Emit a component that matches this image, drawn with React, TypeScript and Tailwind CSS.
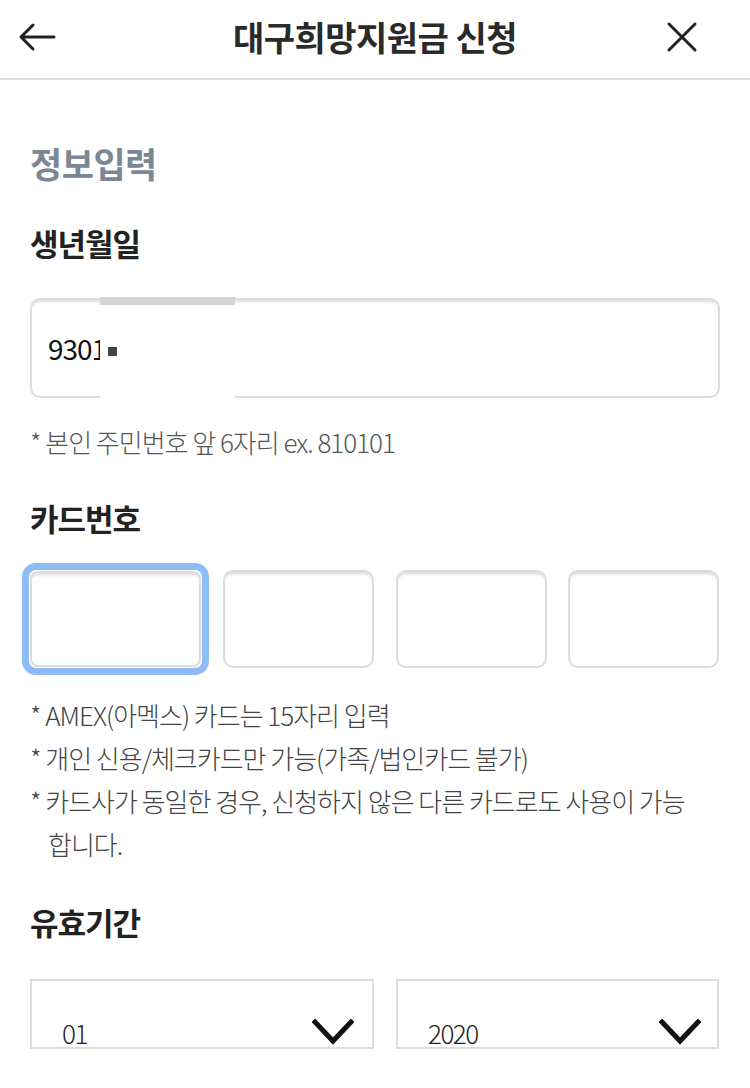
import React from "react";

const font = { fontFamily: '"Noto Sans CJK KR", "Noto Sans", sans-serif' };

const Chevron = () => (
    <svg width="42" height="26" viewBox="0 0 42 26" fill="none">
        <path d="M3 3 L21 22 L39 3" stroke="#111" strokeWidth="5" strokeLinecap="square" />
    </svg>
);

const Select = ({ value, className }: { value: string; className: string }) => (
    <div className={`h-[70px] border-2 border-[#dddddd] flex items-center justify-between pt-[36px] ${className}`}>
        <span className="text-[26px] font-light text-[#222] tracking-[-1.5px]">{value}</span>
        <Chevron />
    </div>
);

const CardBox = ({ className }: { className: string }) => (
    <div className={`h-[98px] rounded-[10px] border-2 border-[#dcdcdc] bg-white shadow-[inset_0_4px_3px_-2px_rgba(0,0,0,0.15)] ${className}`} />
);

export default function App() {
    return (
        <div className="w-[750px] h-[1088px] overflow-hidden bg-white text-[#222]" style={font}>

            {/* HEADER */}
            <div className="h-[80px] border-b-2 border-[#dedede] grid grid-cols-[1fr_auto_1fr] items-center px-[18px]">
                <svg width="38" height="30" viewBox="0 0 38 30" fill="none" className="-mt-[4px]">
                    <path d="M36 15 H4 M15 3 L3 15 L15 27" stroke="#222" strokeWidth="3" strokeLinecap="round" strokeLinejoin="round" />
                </svg>
                <h1 className="text-[34px] font-bold tracking-[-0.5px] text-[#2a2a2a] -mt-[6px]">대구희망지원금 신청</h1>
                <svg width="32" height="32" viewBox="0 0 32 32" fill="none" className="justify-self-end mr-[34px] -mt-[4px]">
                    <path d="M3 3 L29 29 M29 3 L3 29" stroke="#222" strokeWidth="3" strokeLinecap="round" />
                </svg>
            </div>

            <div className="px-[30px]">
                <h2 className="mt-[61px] text-[35px] font-bold text-[#7b8794] tracking-[-0.5px] leading-[44px]">정보입력</h2>

                {/* BIRTH */}
                <h3 className="mt-[38px] text-[31px] font-bold tracking-[-1px] leading-[40px]">생년월일</h3>
                <div className="relative mt-[35px] h-[100px] rounded-[10px] border-2 border-[#dcdcdc] shadow-[inset_0_4px_3px_-2px_rgba(0,0,0,0.12)] flex items-center pl-[16px]">
                    <span className="text-[28px] text-[#111] tracking-[-1px]">9301</span>
                    {/* masked part */}
                    <div className="absolute left-[68px] top-[-3px] w-[135px] h-[104px] bg-white">
                        <div className="h-[8px] bg-[#d4d4d4]" />
                    </div>
                    <span className="absolute left-[76px] top-[47px] w-[9px] h-[9px] bg-[#444]" />
                </div>
                <p className="mt-[26px] text-[26px] font-light text-[#555] tracking-[-1px] leading-[36px]">* 본인 주민번호 앞 6자리 ex. 810101</p>

                {/* CARD NUMBER */}
                <h3 className="mt-[38px] text-[31px] font-bold tracking-[-1px] leading-[40px]">카드번호</h3>
                <div className="mt-[25px] flex items-center">
                    <div className="-ml-[8px] rounded-[14px] border-[7px] border-[#8ebcf6] p-[1px]">
                        <div className="w-[171px] h-[96px] rounded-[8px] border-2 border-[#dcdcdc] shadow-[inset_0_4px_3px_-2px_rgba(0,0,0,0.15)]" />
                    </div>
                    <CardBox className="ml-[14px] w-[151px]" />
                    <CardBox className="ml-[22px] w-[151px]" />
                    <CardBox className="ml-[21px] w-[151px]" />
                </div>
                <div className="mt-[18px] text-[26px] font-light text-[#444] tracking-[-1px] leading-[43px] pr-[20px]">
                    <p>* AMEX(아멕스) 카드는 15자리 입력</p>
                    <p>* 개인 신용/체크카드만 가능(가족/법인카드 불가)</p>
                    <p className="pl-[18px] -indent-[18px]">* 카드사가 동일한 경우, 신청하지 않은 다른 카드로도 사용이 가능<br />합니다.</p>
                </div>

                {/* EXPIRY */}
                <h3 className="mt-[37px] text-[31px] font-bold tracking-[-1px] leading-[40px]">유효기간</h3>
                <div className="mt-[37px] flex gap-[22px]">
                    <Select value="01" className="w-[344px] pl-[30px] pr-[18px]" />
                    <Select value="2020" className="w-[323px] pl-[30px] pr-[16px]" />
                </div>
            </div>
        </div>
    );
}
